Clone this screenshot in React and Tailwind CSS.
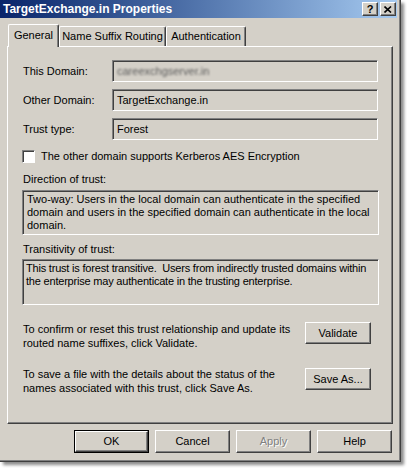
import React from 'react';

const raised =
  'border border-t-white border-l-white border-r-[#404040] border-b-[#404040] shadow-[inset_-1px_-1px_0_#808080]';
const sunken =
  'border border-t-[#808080] border-l-[#808080] border-r-white border-b-white shadow-[inset_1px_1px_0_#404040]';

const Field = ({ label, children }) => (
  <div className="flex items-center h-[22px]">
    <div className="w-[89px]">{label}</div>
    <div className={`w-[266px] h-[22px] flex items-center pl-[4px] ${sunken}`}>{children}</div>
  </div>
);

const Button = ({ children, className = '', disabled }) => (
  <div
    className={`flex items-center justify-center bg-[#d4d0c8] ${raised} ${className} ${
      disabled ? 'text-[#808080] [text-shadow:1px_1px_0_#fff]' : ''
    }`}
  >
    {children}
  </div>
);

const Tab = ({ label, active, width }) => (
  <div
    className={`flex items-center justify-center border-l border-t border-white rounded-tl-[2px] rounded-tr-[2px] border-r border-r-[#404040] shadow-[inset_-1px_0_0_#808080] bg-[#d4d0c8] ${
      active ? 'h-[23px] relative z-10 -mb-px -ml-px pb-[2px]' : 'h-[20px]'
    }`}
    style={{ width }}
  >
    {label}
  </div>
);

export default function App() {
  return (
    <div className="w-[407px] h-[468px] bg-white font-['Liberation_Sans',Arial,sans-serif] text-[11px] text-black leading-[13px]">
      <div className="w-[401px] h-[462px] bg-[#d4d0c8] flex flex-col border-r border-b border-[#404040] shadow-[inset_-1px_-1px_0_#808080,3px_3px_3px_rgba(0,0,0,0.45)]">
        {/* Title bar */}
        <div className="h-[18px] mr-[3px] flex items-center justify-between bg-gradient-to-r from-[#0a246a] to-[#a6caf0]">
          <span className="pl-[3px] text-white font-bold text-[12px]">TargetExchange.in Properties</span>
          <div className="flex gap-[2px] pr-px">
            <div className={`w-[16px] h-[14px] bg-[#d4d0c8] flex items-center justify-center font-bold text-[11px] ${raised}`}>?</div>
            <div className={`w-[16px] h-[14px] bg-[#d4d0c8] flex items-center justify-center ${raised}`}>
              <svg width="8" height="7" viewBox="0 0 8 7">
                <path d="M0.5 0.5 L7 6.5 M7 0.5 L0.5 6.5" stroke="#000" strokeWidth="1.6" />
              </svg>
            </div>
          </div>
        </div>

        {/* Tabs */}
        <div className="flex items-end h-[23px] mt-[5px] pl-[9px]">
          <Tab label="General" active width={51} />
          <Tab label="Name Suffix Routing" width={107} />
          <Tab label="Authentication" width={80} />
        </div>

        {/* Panel */}
        <div className="ml-[7px] w-[386px] h-[378px] border-l border-t border-white border-r border-b border-r-[#404040] border-b-[#404040] shadow-[inset_-1px_-1px_0_#808080] pt-[13px] pl-[15px] pr-[13px]">
          <div className="flex flex-col gap-[7px]">
            <Field label="This Domain:">
              <span className="text-[#5a5a5a] blur-[1.3px]">careexchgserver.in</span>
            </Field>
            <Field label="Other Domain:">TargetExchange.in</Field>
            <Field label="Trust type:">Forest</Field>
          </div>

          <div className="flex items-center mt-[10px] h-[13px]">
            <div className={`w-[13px] h-[13px] bg-white -ml-px ${sunken}`} />
            <span className="ml-[6px]">The other domain supports Kerberos AES Encryption</span>
          </div>

          <div className="mt-[10px]">Direction of trust:</div>
          <div className={`mt-[4px] -ml-px w-[357px] h-[45px] pl-[4px] pt-[2px] ${sunken}`}>
            Two-way: Users in the local domain can authenticate in the specified domain and users in the specified domain can authenticate in the local domain.
          </div>

          <div className="mt-[8px]">Transitivity of trust:</div>
          <div className={`mt-[3px] -ml-px w-[357px] h-[46px] pl-[3px] pr-px pt-[2px] tracking-[-0.2px] ${sunken}`}>
            This trust is forest transitive.&nbsp; Users from indirectly trusted domains within the enterprise may authenticate in the trusting enterprise.
          </div>

          <div className="flex justify-between items-start mt-[17px] pr-[8px] leading-[14px]">
            <div className="w-[270px]">
              To confirm or reset this trust relationship and update its routed name suffixes, click Validate.
            </div>
            <Button className="w-[66px] h-[22px]">Validate</Button>
          </div>

          <div className="flex justify-between items-start mt-[17px] pr-[8px] leading-[14px]">
            <div className="w-[270px]">
              To save a file with the details about the status of the names associated with this trust, click Save As.
            </div>
            <Button className="w-[66px] h-[22px] mt-px">Save As...</Button>
          </div>
        </div>

        {/* Dialog buttons */}
        <div className="flex justify-end gap-[6px] mt-[6px] mr-[8px]">
          <div className="border border-black">
            <Button className="w-[73px] h-[21px]">OK</Button>
          </div>
          <Button className="w-[75px] h-[23px]">Cancel</Button>
          <Button className="w-[75px] h-[23px]" disabled>Apply</Button>
          <Button className="w-[75px] h-[23px]">Help</Button>
        </div>
      </div>
    </div>
  );
}
